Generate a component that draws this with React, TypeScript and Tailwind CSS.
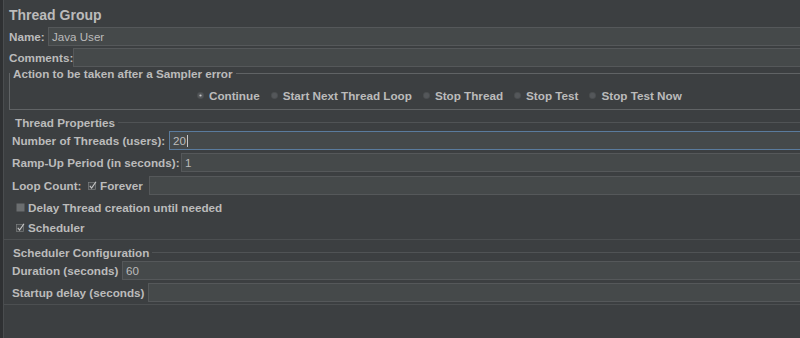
import React from "react";

const LABEL = "font-bold text-[11.7px] leading-[13px] whitespace-nowrap shrink-0";

function Field({ value = "", focused = false }: { value?: string; focused?: boolean }) {
  return (
    <div
      className={`flex h-full flex-1 items-center border bg-[#45494a] px-[3px] text-[11.6px] leading-[13px] ${
        focused ? "border-[#5a7b9d]" : "border-[#55585a]"
      }`}
    >
      <span>{value}</span>
      {focused && <span className="ml-px h-[12px] w-px bg-[#c8c8c8]" />}
    </div>
  );
}

function Radio({ label, selected = false }: { label: string; selected?: boolean }) {
  return (
    <div className="flex items-center gap-[5px]">
      <svg width="7" height="7" viewBox="0 0 7 7" className="shrink-0">
        <circle cx="3.5" cy="3.5" r="3.2" fill="#54575a" stroke="#4a4d4f" strokeWidth="0.6" />
        {selected && <circle cx="3.5" cy="3.5" r="1.1" fill="#c4c4c4" />}
      </svg>
      <span className={LABEL}>{label}</span>
    </div>
  );
}

function Check({ checked }: { checked: boolean }) {
  return (
    <svg width="9" height="9" viewBox="0 0 9 9" className="shrink-0">
      {checked ? (
        <>
          <rect x="0.5" y="1.5" width="7" height="7" fill="#45484a" stroke="#7c7f81" strokeWidth="0.7" />
          <path d="M1.8 4.8 L3.6 7 L8 0.8" fill="none" stroke="#c8c8c8" strokeWidth="1.1" />
        </>
      ) : (
        <rect x="0.5" y="0.5" width="8" height="8" fill="#6b6e70" />
      )}
    </svg>
  );
}

function Legend({ title, pad }: { title: string; pad: string }) {
  return (
    <div className={`flex h-[13px] items-center ${pad}`}>
      <span className={LABEL}>{title}</span>
      <div className="ml-[3px] h-px flex-1 bg-[#505355]" />
    </div>
  );
}

export default function App() {
  return (
    <div className="flex h-[338px] w-[800px] overflow-hidden bg-[#3c3f41] font-['Liberation_Sans',Arial,sans-serif] text-[#bbbbbb]">
      <div className="w-[4px] shrink-0 border-r border-[#4a4d4f] bg-[#2f3133]" />

      <div className="flex w-[830px] shrink-0 flex-col">
        <h1 className="pl-[5px] pt-[7px] text-[14px] font-bold leading-[16px]">Thread Group</h1>

        {/* Name / Comments */}
        <div className="mt-[4px] flex h-[19px] items-center">
          <span className={`${LABEL} w-[44px] pl-[5px]`}>Name:</span>
          <Field value="Java User" />
        </div>
        <div className="mt-[2px] flex h-[19px] items-center">
          <span className={`${LABEL} w-[69px] pl-[5px]`}>Comments:</span>
          <Field />
        </div>

        {/* Sampler error action */}
        <fieldset className="ml-[5px] border border-[#606365]">
          <legend className={`${LABEL} px-[3px]`}>Action to be taken after a Sampler error</legend>
          <div className="mb-[7px] mt-[9px] flex h-[13px] items-center gap-[11px] pl-[187px]">
            <Radio label="Continue" selected />
            <Radio label="Start Next Thread Loop" />
            <Radio label="Stop Thread" />
            <Radio label="Stop Test" />
            <Radio label="Stop Test Now" />
          </div>
        </fieldset>

        {/* Thread properties */}
        <div className="mt-[6px]">
          <Legend title="Thread Properties" pad="pl-[11px]" />
        </div>
        <div className="flex flex-col pl-[8px]">
          <div className="mt-[2px] flex h-[19px] items-center">
            <span className={`${LABEL} w-[157px]`}>Number of Threads (users):</span>
            <Field value="20" focused />
          </div>
          <div className="mt-[3px] flex h-[19px] items-center">
            <span className={`${LABEL} w-[169px]`}>Ramp-Up Period (in seconds):</span>
            <Field value="1" />
          </div>
          <div className="mt-[4px] flex h-[19px] items-center">
            <span className={`${LABEL} w-[76px]`}>Loop Count:</span>
            <Check checked />
            <span className={`${LABEL} ml-[3px] w-[49px]`}>Forever</span>
            <Field />
          </div>
          <div className="mt-[6px] flex h-[13px] items-center gap-[3px] pl-[4px]">
            <Check checked={false} />
            <span className={LABEL}>Delay Thread creation until needed</span>
          </div>
          <div className="mt-[7px] flex h-[13px] items-center gap-[3px] pl-[4px]">
            <Check checked />
            <span className={LABEL}>Scheduler</span>
          </div>
        </div>
        <div className="mt-[5px] h-px bg-[#4c4f51]" />

        {/* Scheduler configuration */}
        <div className="mt-[6px]">
          <Legend title="Scheduler Configuration" pad="pl-[9px]" />
        </div>
        <div className="flex flex-col pl-[8px]">
          <div className="mt-[2px] flex h-[19px] items-center">
            <span className={`${LABEL} w-[110px]`}>Duration (seconds)</span>
            <Field value="60" />
          </div>
          <div className="mt-[3px] flex h-[19px] items-center">
            <span className={`${LABEL} w-[136px]`}>Startup delay (seconds)</span>
            <Field />
          </div>
        </div>
        <div className="mt-[2px] h-px bg-[#4c4f51]" />
      </div>
    </div>
  );
}
